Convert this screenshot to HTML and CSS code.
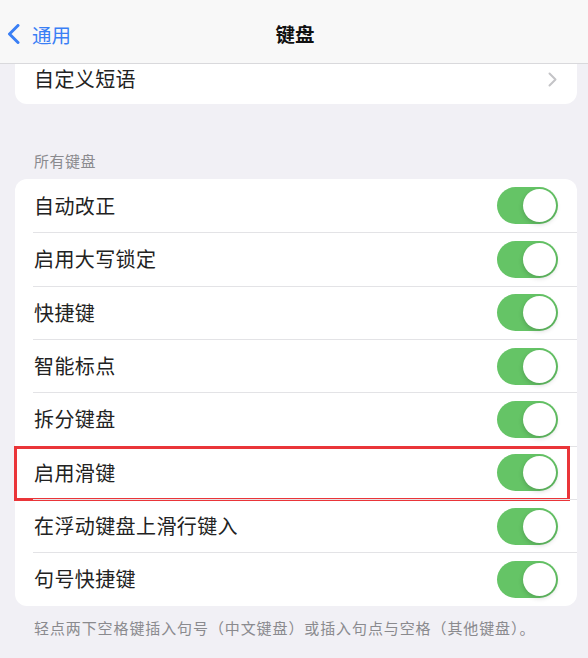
FILE: index.html
```html
<!DOCTYPE html>
<html lang="zh-CN">
<head>
  <meta charset="UTF-8" />
  <title>键盘</title>
  <link rel="stylesheet" href="styles.css">
</head>
<body>
  <header class="navbar">
    <a class="back" href="#">
      <svg class="back-icon" viewBox="0 0 13 20" width="13" height="20">
        <path d="M11 1.5 L2.5 10 L11 18.5" fill="none" stroke="currentColor" stroke-width="3" stroke-linecap="round" stroke-linejoin="round"/>
      </svg>
      <span>通用</span>
    </a>
    <h1 class="title">键盘</h1>
  </header>

  <main class="content">
    <div class="card card-top">
      <div class="link-row">
        <span class="label">自定义短语</span>
        <svg class="chevron" viewBox="0 0 9 15" width="9" height="15">
          <path d="M1.5 1.5 L7.5 7.5 L1.5 13.5" fill="none" stroke="currentColor" stroke-width="2" stroke-linecap="round" stroke-linejoin="round"/>
        </svg>
      </div>
    </div>

    <div class="section-header">所有键盘</div>
    <div class="card" id="keyboard-options"></div>
    <p class="section-footer">轻点两下空格键插入句号（中文键盘）或插入句点与空格（其他键盘）。</p>
  </main>

  <script>
    const OPTIONS = [
      '自动改正',
      '启用大写锁定',
      '快捷键',
      '智能标点',
      '拆分键盘',
      '启用滑键',
      '在浮动键盘上滑行键入',
      '句号快捷键'
    ];
    const HIGHLIGHT = '启用滑键';
    const list = document.getElementById('keyboard-options');

    OPTIONS.forEach(name => {
      const row = document.createElement('div');
      row.className = 'row' + (name === HIGHLIGHT ? ' highlight' : '');
      row.innerHTML = `
        <div class="row-inner">
          <span class="label">${name}</span>
          <span class="switch on"><span class="knob"></span></span>
        </div>`;
      row.querySelector('.switch').onclick = e => e.currentTarget.classList.toggle('on');
      list.appendChild(row);
    });
  </script>
</body>
</html>
```

FILE: styles.css
```css
body {
  margin: 0;
  background: #f1f0f5;
  font-family: "Noto Sans CJK SC", "Noto Sans", sans-serif;
  color: #1c1c1e;
  width: 588px;
  height: 658px;
  overflow: hidden;
}
.navbar {
  height: 63px;
  background: #f8f8f8;
  border-bottom: 1px solid #d9d9dc;
  display: flex;
  align-items: center;
  position: relative;
  z-index: 1;
}
.back {
  display: flex;
  align-items: center;
  gap: 12px;
  padding-left: 7px;
  color: #3a7ff5;
  text-decoration: none;
  font-size: 19.5px;
  margin-top: 6px;
}
.back-icon { margin-top: -2px; }
.title {
  position: absolute;
  left: 0;
  right: 0;
  top: 0;
  margin: 0;
  text-align: center;
  font-size: 19.5px;
  font-weight: 700;
  line-height: 68px;
  padding-left: 2px;
  color: #111;
}
.content {
  display: flex;
  flex-direction: column;
}
.card {
  margin: 0 11px 0 15px;
  background: #fff;
  border-radius: 12px;
}
.card-top {
  border-radius: 0 0 12px 12px;
}
.link-row {
  height: 40px;
  padding: 0 20px 10px 19px;
  box-sizing: border-box;
  display: flex;
  align-items: center;
  justify-content: space-between;
}
.chevron {
  color: #c4c4c7;
}
.label {
  font-size: 20px;
  line-height: 24px;
  letter-spacing: 0.4px;
  color: #222;
}
.section-header {
  padding: 47px 0 8px 34px;
  font-size: 15px;
  line-height: 20px;
  color: #8a8a8e;
  letter-spacing: 0.5px;
}
.row {
  height: 53.33px;
  padding-left: 18px;
  display: flex;
  position: relative;
}
.row-inner {
  flex: 1;
  display: flex;
  align-items: center;
  justify-content: space-between;
  padding: 0 19px 0 1px;
}
.row + .row .row-inner {
  border-top: 1px solid #e3e3e6;
}
.row.highlight::after {
  content: "";
  position: absolute;
  left: -1px;
  right: 7px;
  top: 0;
  bottom: -2px;
  border: 3px solid #ea3539;
  pointer-events: none;
}
.switch {
  width: 61px;
  height: 37px;
  border-radius: 19px;
  background: #e9e9eb;
  position: relative;
  cursor: pointer;
}
.switch.on { background: #65c466; }
.knob {
  position: absolute;
  top: 2px;
  left: 2px;
  width: 33px;
  height: 33px;
  border-radius: 50%;
  background: #fff;
  box-shadow: 0 2px 5px rgba(0, 0, 0, 0.18);
}
.switch.on .knob {
  left: auto;
  right: 2px;
}
.section-footer {
  margin: 12px 0 0 34px;
  font-size: 15px;
  line-height: 20px;
  color: #8a8a8e;
  letter-spacing: 0.9px;
}
```
